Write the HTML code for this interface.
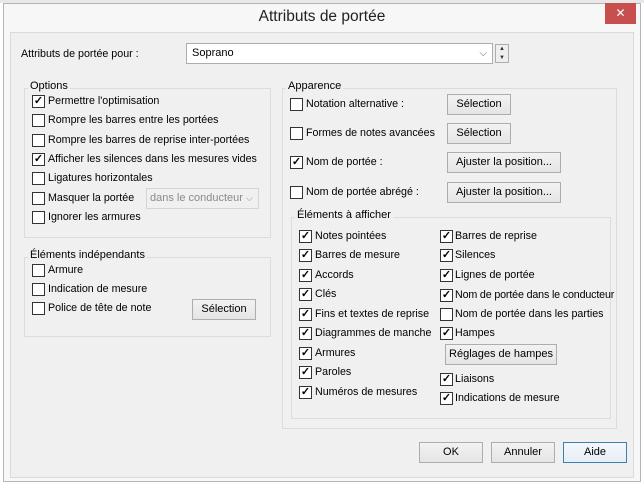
<!DOCTYPE html>
<html><head><meta charset="utf-8"><style>
*{box-sizing:border-box;margin:0;padding:0}
body{width:644px;height:482px;background:#fff;position:relative;overflow:hidden;font-family:"Liberation Sans",sans-serif;font-size:11px;color:#000}
.a{position:absolute;white-space:nowrap}
.frame{left:3px;top:3px;width:638px;height:479px;background:#f7f7f7;border:1px solid #b5b5b5}
.content{left:10px;top:32px;width:624px;height:446px;background:#f0f0f0;border:1px solid #dadada}
.grp{position:absolute;border:1px solid #dcdcdc}
.gt{position:absolute;background:#f0f0f0;padding:0 2px;line-height:13px}
.cb{position:absolute;width:13px;height:13px;background:#fff;border:1px solid #333;font-size:11px;line-height:11px;text-align:center;font-weight:bold}
.lb{position:absolute;line-height:13px;font-size:10.7px}
.btn{position:absolute;height:21px;border:1px solid #adadad;background:linear-gradient(#f2f2f2,#e5e5e5);text-align:center;line-height:19px}
</style></head><body>
<div class="a" style="left:0;top:0;width:644px;height:3px;background:#e8e8e8"></div>
<div class="a frame"></div>
<div class="a" style="left:0;top:8px;width:644px;text-align:center;font-size:15.5px;color:#222">Attributs de portée</div>
<div class="a" style="left:605px;top:3px;width:31px;height:21px;background:#c7504f;color:#fff;text-align:center;font-size:12px;line-height:20px">✕</div>
<div class="a content"></div>

<div class="lb" style="left:21px;top:48px">Attributs de portée pour :</div>
<div class="a" style="left:186px;top:43px;width:307px;height:21px;background:#fff;border:1px solid #abadb3;padding-left:5px;line-height:19px">Soprano<span style="position:absolute;right:5px;top:0;color:#666;font-size:10px">⌵</span></div>
<div class="a" style="left:495px;top:44px;width:14px;height:19px;border:1px solid #adadad;background:#eee;font-size:6px;line-height:9px;text-align:center;color:#333">▲<br>▼</div>

<!-- Options -->
<div class="grp" style="left:24px;top:88px;width:247px;height:150px"></div>
<div class="gt" style="left:28px;top:80px">Options</div>
<div class="cb" style="left:32px;top:95px">✓</div><div class="lb" style="left:48px;top:95px">Permettre l'optimisation</div>
<div class="cb" style="left:32px;top:114px"></div><div class="lb" style="left:48px;top:114px">Rompre les barres entre les portées</div>
<div class="cb" style="left:32px;top:134px"></div><div class="lb" style="left:48px;top:134px">Rompre les barres de reprise inter-portées</div>
<div class="cb" style="left:32px;top:153px">✓</div><div class="lb" style="left:48px;top:153px">Afficher les silences dans les mesures vides</div>
<div class="cb" style="left:32px;top:172px"></div><div class="lb" style="left:48px;top:172px">Ligatures horizontales</div>
<div class="cb" style="left:32px;top:192px"></div><div class="lb" style="left:48px;top:192px">Masquer la portée</div>
<div class="a" style="left:146px;top:188px;width:113px;height:21px;border:1px solid #d5d5d5;background:#f0f0f0;color:#8a8a8a;padding-left:3px;line-height:19px">dans le conducteur <span style="font-size:9px">⌵</span></div>
<div class="cb" style="left:32px;top:211px"></div><div class="lb" style="left:48px;top:211px">Ignorer les armures</div>

<!-- Elements independants -->
<div class="grp" style="left:24px;top:257px;width:247px;height:80px"></div>
<div class="gt" style="left:28px;top:249px">Éléments indépendants</div>
<div class="cb" style="left:32px;top:264px"></div><div class="lb" style="left:48px;top:264px">Armure</div>
<div class="cb" style="left:32px;top:283px"></div><div class="lb" style="left:48px;top:283px">Indication de mesure</div>
<div class="cb" style="left:32px;top:302px"></div><div class="lb" style="left:48px;top:302px">Police de tête de note</div>
<div class="btn" style="left:192px;top:299px;width:64px">Sélection</div>

<!-- Apparence -->
<div class="grp" style="left:282px;top:88px;width:335px;height:341px"></div>
<div class="gt" style="left:286px;top:80px">Apparence</div>
<div class="cb" style="left:290px;top:98px"></div><div class="lb" style="left:306px;top:98px">Notation alternative :</div>
<div class="btn" style="left:447px;top:94px;width:64px">Sélection</div>
<div class="cb" style="left:290px;top:127px"></div><div class="lb" style="left:306px;top:127px">Formes de notes avancées</div>
<div class="btn" style="left:447px;top:123px;width:64px">Sélection</div>
<div class="cb" style="left:290px;top:156px">✓</div><div class="lb" style="left:306px;top:156px">Nom de portée :</div>
<div class="btn" style="left:447px;top:152px;width:114px">Ajuster la position...</div>
<div class="cb" style="left:290px;top:186px"></div><div class="lb" style="left:306px;top:186px">Nom de portée abrégé :</div>
<div class="btn" style="left:447px;top:182px;width:114px">Ajuster la position...</div>

<div class="grp" style="left:291px;top:217px;width:320px;height:202px"></div>
<div class="gt" style="left:295px;top:209px">Éléments à afficher</div>
<div class="cb" style="left:299px;top:230px">✓</div><div class="lb" style="left:315px;top:230px">Notes pointées</div>
<div class="cb" style="left:299px;top:249px">✓</div><div class="lb" style="left:315px;top:249px">Barres de mesure</div>
<div class="cb" style="left:299px;top:269px">✓</div><div class="lb" style="left:315px;top:269px">Accords</div>
<div class="cb" style="left:299px;top:288px">✓</div><div class="lb" style="left:315px;top:288px">Clés</div>
<div class="cb" style="left:299px;top:308px">✓</div><div class="lb" style="left:315px;top:308px">Fins et textes de reprise</div>
<div class="cb" style="left:299px;top:327px">✓</div><div class="lb" style="left:315px;top:327px">Diagrammes de manche</div>
<div class="cb" style="left:299px;top:347px">✓</div><div class="lb" style="left:315px;top:347px">Armures</div>
<div class="cb" style="left:299px;top:366px">✓</div><div class="lb" style="left:315px;top:366px">Paroles</div>
<div class="cb" style="left:299px;top:386px">✓</div><div class="lb" style="left:315px;top:386px">Numéros de mesures</div>

<div class="cb" style="left:440px;top:230px">✓</div><div class="lb" style="left:455px;top:230px">Barres de reprise</div>
<div class="cb" style="left:440px;top:249px">✓</div><div class="lb" style="left:455px;top:249px">Silences</div>
<div class="cb" style="left:440px;top:269px">✓</div><div class="lb" style="left:455px;top:269px">Lignes de portée</div>
<div class="cb" style="left:440px;top:289px">✓</div><div class="lb" style="left:455px;top:289px;letter-spacing:-0.15px">Nom de portée dans le conducteur</div>
<div class="cb" style="left:440px;top:308px"></div><div class="lb" style="left:455px;top:308px">Nom de portée dans les parties</div>
<div class="cb" style="left:440px;top:327px">✓</div><div class="lb" style="left:455px;top:327px">Hampes</div>
<div class="btn" style="left:445px;top:344px;width:112px">Réglages de hampes</div>
<div class="cb" style="left:440px;top:373px">✓</div><div class="lb" style="left:455px;top:373px">Liaisons</div>
<div class="cb" style="left:440px;top:392px">✓</div><div class="lb" style="left:455px;top:392px">Indications de mesure</div>

<div class="btn" style="left:419px;top:442px;width:64px">OK</div>
<div class="btn" style="left:491px;top:442px;width:64px">Annuler</div>
<div class="btn" style="left:563px;top:442px;width:64px;border-color:#3c7fb1;background:linear-gradient(#f4f8fc,#e6eef6)">Aide</div>
</body></html>
